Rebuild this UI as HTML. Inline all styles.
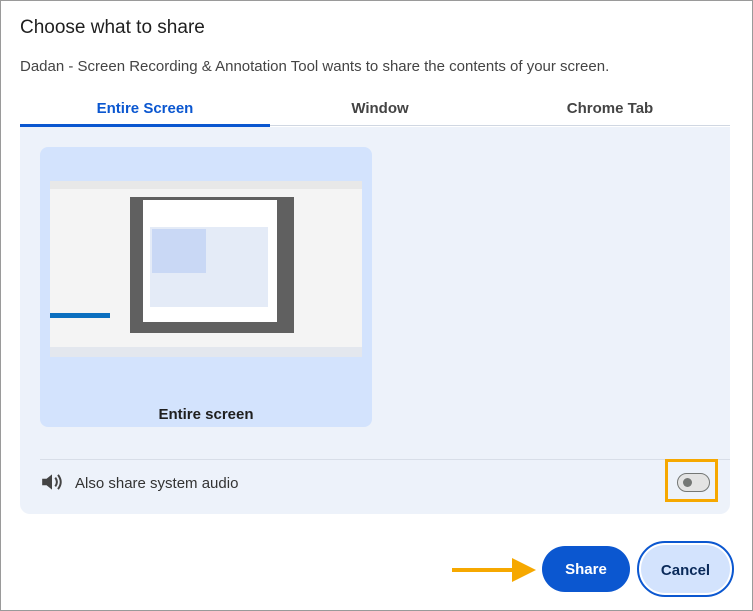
<!DOCTYPE html><html><head><style>
body{margin:0;width:753px;height:611px;background:#fff;font-family:"Liberation Sans",sans-serif;position:relative;overflow:hidden}
.frame{position:absolute;left:0;top:0;width:751px;height:609px;border:1px solid #9a9a9a}
.a{position:absolute}
</style></head><body>
<div class="frame"></div>
<div class="a" style="left:20px;top:17px;font-size:19px;color:#1f1f1f">Choose what to share</div>
<div class="a" style="left:20px;top:58px;font-size:15px;color:#444">Dadan - Screen Recording &amp; Annotation Tool wants to share the contents of your screen.</div>
<div class="a" style="left:20px;top:100px;width:250px;text-align:center;font-size:15px;color:#0b57d0;font-weight:bold">Entire Screen</div>
<div class="a" style="left:270px;top:100px;width:220px;text-align:center;font-size:15px;color:#444;font-weight:bold">Window</div>
<div class="a" style="left:490px;top:100px;width:240px;text-align:center;font-size:15px;color:#444;font-weight:bold">Chrome Tab</div>
<div class="a" style="left:20px;top:125px;width:710px;height:1px;background:#d0d7e2"></div>
<div class="a" style="left:20px;top:124px;width:250px;height:3px;background:#0b57d0"></div>
<div class="a" style="left:20px;top:127px;width:710px;height:387px;background:#edf2fa;border-radius:0 0 10px 10px"></div>
<div class="a" style="left:40px;top:147px;width:332px;height:280px;background:#d3e3fd;border-radius:8px"></div>
<div class="a" style="left:50px;top:181px;width:312px;height:176px;background:#f4f4f4">
 <div class="a" style="left:0;top:0;width:312px;height:8px;background:#e8e8e8"></div>
 <div class="a" style="left:0;top:132px;width:60px;height:5px;background:#0b6fbf"></div>
 <div class="a" style="left:80px;top:16px;width:164px;height:136px;background:#606060"></div>
 <div class="a" style="left:93px;top:19px;width:134px;height:122px;background:#fff"></div>
 <div class="a" style="left:100px;top:46px;width:118px;height:80px;background:#e4ebf7"></div>
 <div class="a" style="left:102px;top:48px;width:54px;height:44px;background:#c9d8f5"></div>
 <div class="a" style="left:0;top:166px;width:312px;height:10px;background:#e3e7ee"></div>
</div>
<div class="a" style="left:40px;top:406px;width:332px;text-align:center;font-size:15px;font-weight:bold;color:#1f1f1f">Entire screen</div>
<div class="a" style="left:40px;top:459px;width:690px;height:1px;background:#d8dee8"></div>
<svg class="a" style="left:40px;top:471px" width="24" height="22" viewBox="0 0 22 20"><path d="M2 7h4l5-4v14l-5-4H2z" fill="#444"/><path d="M14 6q3 4 0 8M16.5 3.5q5 6.5 0 13" stroke="#444" stroke-width="1.8" fill="none"/></svg>
<div class="a" style="left:75px;top:475px;font-size:15px;color:#333">Also share system audio</div>
<div class="a" style="left:665px;top:459px;width:47px;height:37px;border:3px solid #f6a800"></div>
<div class="a" style="left:677px;top:473px;width:31px;height:17px;border:1px solid #747775;border-radius:10px;background:#e3e3e3"></div>
<div class="a" style="left:683px;top:478px;width:9px;height:9px;border-radius:50%;background:#747775"></div>
<svg class="a" style="left:452px;top:556px" width="86" height="28"><path d="M0 14h62" stroke="#f6a800" stroke-width="4"/><path d="M60 2l24 12-24 12z" fill="#f6a800"/></svg>
<div class="a" style="left:542px;top:546px;width:88px;height:46px;background:#0b57d0;border-radius:23px;color:#fff;font-weight:bold;font-size:15px;text-align:center;line-height:48px">Share</div>
<div class="a" style="left:637px;top:541px;width:93px;height:52px;background:#d3e3fd;border:2px solid #0b57d0;border-radius:28px;box-shadow:inset 0 0 0 2px #fff;color:#0a2a5a;font-weight:bold;font-size:15px;text-align:center;line-height:55px">Cancel</div>
</body></html>
